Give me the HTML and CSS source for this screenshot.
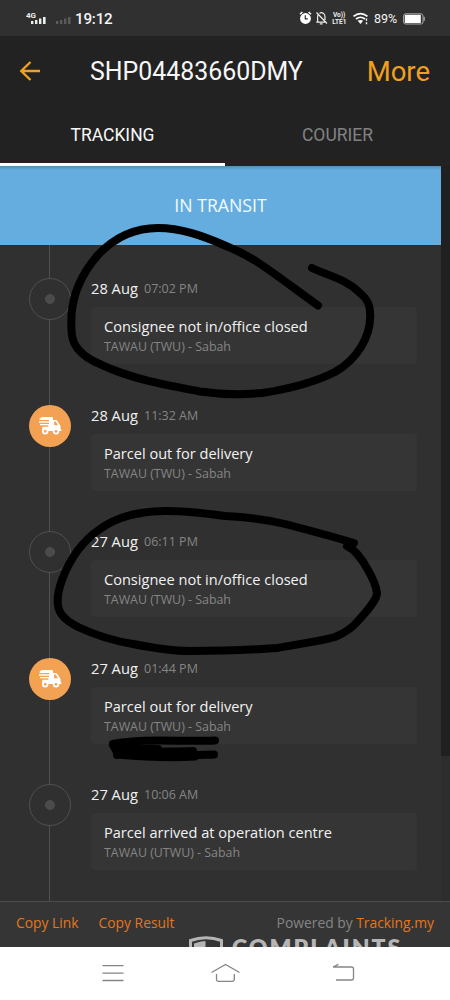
FILE: index.html
```
<!DOCTYPE html>
<html lang="en">
<head>
<meta charset="utf-8">
<title>SHP04483660DMY</title>
<link rel="stylesheet" href="styles.css">
</head>
<body>
<svg width="0" height="0" class="defs">
  <symbol id="van" viewBox="0 0 24 20">
    <path fill="#fff" d="M4 1h9.500c1 0 1.500.5 1.500 1.400V4h2.600c.7 0 1.100.3 1.500.8l3 4.400c.3.500.4.900.4 1.400v2.700h.8v1.800H4.300v-4.300h6V9.300H2V7.900h9V6.700H1V5.300h10V4H1.600V2.500z"/>
    <path fill="#f3a254" d="M16.200 5.600h1.500l2.400 3.700h-3.900z"/>
    <circle cx="7.200" cy="15.300" r="2.300" fill="#f3a254" stroke="#fff" stroke-width="1.800"/>
    <circle cx="18" cy="15.300" r="2.300" fill="#f3a254" stroke="#fff" stroke-width="1.800"/>
  </symbol>
</svg>
<div class="phone">
  <div class="status">
    <div class="status-left">
      <svg width="48" height="18" viewBox="0 0 48 18">
        <g fill="#eee"><rect x="5" y="12" width="2.400" height="3"/><rect x="9" y="11" width="2.400" height="4"/><rect x="13" y="9.500" width="2.400" height="5.500"/><rect x="17" y="8" width="2.600" height="7"/></g>
        <g fill="#5a5a5a"><rect x="30" y="12" width="2.400" height="3"/><rect x="34" y="11" width="2.400" height="4"/><rect x="38" y="9.500" width="2.400" height="5.500"/><rect x="42" y="8" width="2.600" height="7"/></g>
        <text class="net" x="0" y="8.500">4G</text>
      </svg>
      <span class="clock">19:12</span>
    </div>
    <div class="status-right">
      <svg width="72" height="16" viewBox="0 0 72 16">
        <circle cx="6.500" cy="8.500" r="5.400" fill="#fff"/>
        <path d="M1 4.200 3.400 2M9.600 2 12 4.200" stroke="#fff" stroke-width="1.500"/>
        <path d="M6.300 5.300v3.600h2.500" stroke="#303030" stroke-width="1.200" fill="none"/>
        <g stroke="#eee" stroke-width="1.200" fill="none"><path d="M17.500 2.500 28 13.500M17.300 12.200h9M18.600 12V7q0-2 1-3M20.500 3.200q2-1.200 4 .2 1.500 1.200 1.500 3.600v3M20.800 13.800h2.800"/></g>
        <text class="lte" x="34" y="7">Vo))</text>
        <text class="lte" x="33.300" y="13.500">LTE1</text>
        <g stroke="#fff" stroke-width="1.700" fill="none"><path d="M54.500 6.300q7-5.500 14 0M57 9q4.500-3.500 9 0"/></g>
        <path d="M58.700 10.800q2.800-1.800 5.400 0L61.500 14z" fill="#fff"/>
        <path d="M67.500 8.500v2.300M67.500 12.200v2" stroke="#fff" stroke-width="1.400"/>
      </svg>
      <span class="pct">89%</span>
      <svg width="22" height="12" viewBox="0 0 22 12"><rect x=".6" y=".8" width="19.400" height="10.200" rx="2" fill="none" stroke="#aaa" stroke-width="1"/><rect x="1.800" y="1.800" width="16" height="8.200" fill="#fff"/><rect x="20.500" y="3.800" width="1.300" height="4" fill="#aaa"/></svg>
    </div>
  </div>
  <header class="bar">
    <svg class="back" width="22" height="22" viewBox="0 0 22 22"><path d="M21 11H2.500M11.500 2 2.300 11l9.200 9" fill="none" stroke="#f0a020" stroke-width="2.400"/></svg>
    <span class="title">SHP04483660DMY</span>
    <span class="more">More</span>
  </header>
  <nav class="tabs">
    <div class="tab active"><span>TRACKING</span></div>
    <div class="tab"><span>COURIER</span></div>
  </nav>
  <main class="body">
    <div class="content">
      <div class="banner"><span>IN TRANSIT</span></div>
      <div class="timeline">
        <div class="event">
          <div class="rail"><div class="node"></div></div>
          <div class="info"><div class="when"><span class="date">28 Aug</span><span class="time">07:02 PM</span></div>
          <div class="card"><div class="what"><span>Consignee not in/office closed</span></div><div class="where"><span>TAWAU (TWU) - Sabah</span></div></div></div>
        </div>
        <div class="event">
          <div class="rail"><div class="node van"><svg width="24" height="20"><use href="#van"/></svg></div></div>
          <div class="info"><div class="when"><span class="date">28 Aug</span><span class="time">11:32 AM</span></div>
          <div class="card"><div class="what"><span>Parcel out for delivery</span></div><div class="where"><span>TAWAU (TWU) - Sabah</span></div></div></div>
        </div>
        <div class="event">
          <div class="rail"><div class="node"></div></div>
          <div class="info"><div class="when"><span class="date">27 Aug</span><span class="time">06:11 PM</span></div>
          <div class="card"><div class="what"><span>Consignee not in/office closed</span></div><div class="where"><span>TAWAU (TWU) - Sabah</span></div></div></div>
        </div>
        <div class="event">
          <div class="rail"><div class="node van"><svg width="24" height="20"><use href="#van"/></svg></div></div>
          <div class="info"><div class="when"><span class="date">27 Aug</span><span class="time">01:44 PM</span></div>
          <div class="card"><div class="what"><span>Parcel out for delivery</span></div><div class="where"><span>TAWAU (TWU) - Sabah</span></div></div></div>
        </div>
        <div class="event">
          <div class="rail"><div class="node"></div></div>
          <div class="info"><div class="when"><span class="date">27 Aug</span><span class="time">10:06 AM</span></div>
          <div class="card"><div class="what"><span>Parcel arrived at operation centre</span></div><div class="where"><span>TAWAU (UTWU) - Sabah</span></div></div></div>
        </div>
      </div>
    </div>
    <div class="scroll"><div class="thumb"></div></div>
  </main>
  <footer class="foot">
    <a class="link">Copy Link</a><a class="link second">Copy Result</a>
    <span class="powered">Powered by <a class="link">Tracking.my</a></span>
    <div class="mark">
      <svg width="36" height="14" viewBox="0 0 36 14"><path d="M2.500 16V4.500Q18-1 33.500 4.500V16" fill="none" stroke="#b5b5b5" stroke-width="3"/><path d="M6 16V7.500q6-2.300 11.500-2.500v11z" fill="#b5b5b5"/></svg>
      <span>COMPLAINTS</span>
    </div>
  </footer>
  <div class="keys">
    <svg width="450" height="53" viewBox="0 0 450 53" fill="none" stroke="#858585" stroke-width="1.300">
      <path d="M102.500 18.700h21M102.500 26.200h21M102.500 33.500h21"/>
      <path d="M211.500 25.500 225.500 17.500 239.500 25.500M216.500 27v5.500q0 1.800 1.800 1.800H232.500q1.800 0 1.800-1.800V27"/>
      <path d="M333 20h18.500q2 0 2 2v9q0 2-2 2H336M338.500 17.300 333 20"/>
    </svg>
  </div>
  <svg class="ink" width="450" height="1000" viewBox="0 0 450 1000" fill="none" stroke="#000" stroke-width="8" stroke-linecap="round" stroke-linejoin="round">
    <path d="M318 305.500C296 290 276 274 255 260.500C246 255 236 250 225 245.500C203 236 181 228 158 228C131 228 112 240 98 255C82 273 73 294 71.500 315C71 331 71 341 78 349C86 359 99 364 111 369C141 381 168 385 200 391.500C221 394.500 240 395 262 393C289 389 317 381 335 372C347 365 355 357 361 347C369 334 371 324 370 312C370 303 366 298 360 293C346 279 329 276 312 268"/>
    <path d="M354 543C331 536 308 530 285 524C264 519 246 517 225 516C204 513 187 511 167 511C139 511 118 516 100 529C81 542 69 561 62 580C58 591 57 602 58.500 608C61 617 69 622 78 627C93 634 114 641 133 644C153 648 171 651 190 651C220 651 250 650 277 648C297 644 317 642 335 637C345 633 352 628 358 621C366 612 377 600 377 593C376 585 372 577 368 570C362 559 356 550 347 546"/>
    <path d="M113 744C144 738 180 742 215 740.500M113 745 118 754M117 755C138 751 160 752 193 751M118 754.500C145 757 170 758 195 756.500M118 749H158M192 756C199 754 207 755 214 754.500"/>
  </svg>
</div>
</body>
</html>
```
FILE: styles.css
```
* { box-sizing: border-box; }
body { margin: 0; background: #303030; }
.defs { position: absolute; }
.phone { position: relative; width: 450px; height: 1000px; overflow: hidden; display: flex; flex-direction: column; font-family: "Open Sans", sans-serif; white-space: nowrap; }
.phone svg { display: block; flex: none; }
.status { height: 36px; background: #303030; display: flex; justify-content: space-between; font-family: Roboto, sans-serif; color: #f4f4f4; }
.status-left { display: flex; padding: 9px 0 0 26px; }
.net { font: 700 8px Roboto, sans-serif; fill: #eee; }
.lte { font: 700 6.5px Roboto, sans-serif; fill: #eee; }
.clock { font-size: 15.2px; line-height: 20px; margin-left: 1px; font-weight: 500; letter-spacing: -.2px; }
.status-right { display: flex; padding: 10px 25px 0 0; }
.pct { font-size: 12.5px; line-height: 17px; width: 29px; margin-left: 3px; }
.status-right svg:last-child { margin-top: 3px; }
.bar { height: 68px; background: #222; display: flex; align-items: center; padding: 2px 20px 0 19px; font-family: Roboto, sans-serif; }
.title { color: #f6f6f6; font-size: 24.9px; margin-left: 49px; }
.more { color: #efa01c; font-size: 27.5px; margin-left: auto; }
.tabs { height: 62px; background: #222; display: flex; font: 17.5px Roboto, sans-serif; color: #828282; }
.tab { width: 225px; height: 62px; text-align: center; line-height: 62px; }
.tab.active { color: #f8f8f8; border-bottom: 3px solid #fff; }
.body { height: 735px; display: flex; background: #303030; }
.content { width: 441px; overflow: hidden; }
.banner { height: 79px; background: linear-gradient(#528db6, #65addf 4px); color: #f2fbff; text-align: center; font-size: 17.7px; line-height: 79px; }
.scroll { width: 9px; background: #2d2d2d; }
.thumb { height: 590px; background: #202020; }
.timeline { height: 656px; overflow: hidden; }
.event { display: flex; height: 126.6px; }
.event:last-child { height: 160px; }
.rail { width: 91px; padding: 33px 0 0 28.5px; background: linear-gradient(#505050, #505050) 49px 0 / 1px 100% no-repeat; }
.node { width: 42px; height: 42px; border: 1px solid #505050; border-radius: 50%; background: radial-gradient(circle, #4b4b4b 4.6px, #303030 5.2px); }
.node.van { border: 0; background: #f3a254; display: flex; justify-content: center; align-items: center; }
.info { width: 326px; padding-top: 32px; }
.when { height: 30px; line-height: 23px; display: flex; }
.date { font-size: 14.7px; color: #f0f0f0; width: 53px; }
.time { font-size: 12.5px; color: #858585; line-height: 24px; }
.card { height: 57px; border-radius: 4px; background: #353535; padding: 9px 0 0 13px; }
.what { font-size: 14.57px; line-height: 21px; color: #f2f2f2; }
.where { font-size: 12.4px; line-height: 19px; color: #858585; }
.foot { position: relative; height: 46px; background: #353535; border-top: 1px solid #4b4b4b; display: flex; padding: 0 16px; font-size: 13.85px; line-height: 42px; color: #858585; overflow: hidden; }
.link { color: #e5761c; }
.second { margin-left: 20px; }
.powered { margin-left: auto; }
.mark { position: absolute; left: 188px; top: 34px; display: flex; color: #b5b5b5; font: 800 23px/22px Lato, sans-serif; gap: 8px; letter-spacing: 2px; }
.keys { height: 53px; background: #fff; }
.ink { position: absolute; left: 0; top: 0; }
```
